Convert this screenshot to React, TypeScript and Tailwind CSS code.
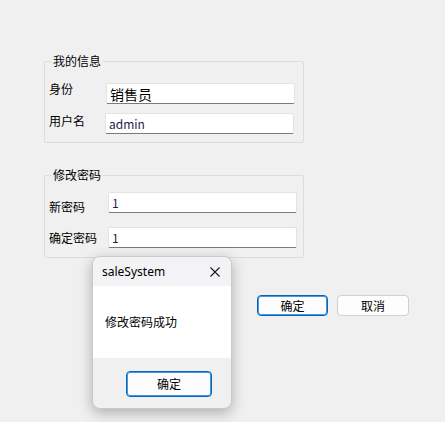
import React from 'react';

const cjk = { fontFamily: '"Noto Sans CJK SC", "Noto Sans", sans-serif' };
const ui = { fontFamily: '"Noto Sans", "Noto Sans CJK SC", sans-serif' };

interface FieldProps {
  value: string;
  className?: string;
  textClass?: string;
}

const TextBox: React.FC<FieldProps> = ({ value, className = '', textClass = '' }) => (
  <div
    className={`h-[21px] w-[189px] bg-white border border-[#e3e3e3] border-b-[#7a7a7a] rounded-[2px] flex items-center pl-[3px] ${className}`}
  >
    <span className={`whitespace-nowrap ${textClass}`} style={cjk}>
      {value}
    </span>
  </div>
);

const Row: React.FC<{ label: string; labelW: string; labelTop: string; top: string; value: string; textClass?: string }> = ({
  label,
  labelW,
  labelTop,
  top,
  value,
  textClass,
}) => (
  <div className={`flex items-start pl-[4px] ${top}`}>
    <span className={`text-[12px] leading-[14px] text-black ${labelW} ${labelTop}`} style={cjk}>
      {label}
    </span>
    <TextBox value={value} textClass={textClass} />
  </div>
);

export default function App() {
  return (
    <div className="relative w-[445px] h-[422px] overflow-hidden bg-[#f0f0f0] pt-[54px]">
      <fieldset className="ml-[44px] w-[260px] h-[89px] border border-[#dcdcdc] rounded-[2px]">
        <legend className="ml-[6px] px-[2px] text-[12px] leading-[14px] text-black" style={cjk}>
          我的信息
        </legend>
        <div className="mt-[14px] flex items-start pl-[4px]">
          <span className="w-[57px] text-[12px] leading-[14px] text-black" style={cjk}>
            身份
          </span>
          <TextBox value="销售员" className="mt-px" textClass="text-[14px] leading-[16px] text-black" />
        </div>
        <div className="mt-[9px] flex items-start pl-[4px]">
          <span className="w-[56px] mt-px text-[12px] leading-[14px] text-black" style={cjk}>
            用户名
          </span>
          <TextBox value="admin" textClass="text-[12px] leading-[14px] text-[#1c1c48]" />
        </div>
      </fieldset>

      <fieldset className="ml-[44px] mt-[25px] w-[260px] h-[90px] border border-[#dcdcdc] rounded-[2px]">
        <legend className="ml-[6px] px-[2px] text-[12px] leading-[14px] text-black" style={cjk}>
          修改密码
        </legend>
        <Row label="新密码" labelW="w-[59px]" labelTop="mt-[8px]" top="mt-[10px]" value="1" textClass="text-[12px] leading-[14px] text-[#1c1c48]" />
        <Row label="确定密码" labelW="w-[59px]" labelTop="mt-[4px]" top="mt-[13px]" value="1" textClass="text-[12px] leading-[14px] text-[#1c1c48]" />
      </fieldset>

      <div className="mt-[37px] ml-[257px] flex gap-[9px]">
        <button
          className="w-[71px] h-[21px] rounded-[4px] bg-[#fdfdfd] border border-[#0067c0] shadow-[inset_0_0_0_1px_#4a95dc] text-[12px] leading-[14px] text-black"
          style={cjk}
        >
          确定
        </button>
        <button
          className="w-[72px] h-[21px] rounded-[4px] bg-[#fdfdfd] border border-[#d0d0d0] text-[12px] leading-[14px] text-black"
          style={cjk}
        >
          取消
        </button>
      </div>

      {/* message box */}
      <div className="absolute left-[92px] top-[256px] w-[140px] h-[153px] rounded-[8px] border border-[#c9c9c9] bg-[#f0f0f0] overflow-hidden shadow-[0_4px_14px_rgba(0,0,0,0.28)] flex flex-col">
        <div className="h-[29px] bg-[#f3f2f5] flex items-center justify-between pl-[9px] pr-[9px]">
          <span className="text-[12px] leading-[14px] text-black" style={ui}>
            saleSystem
          </span>
          <svg width="12" height="12" viewBox="0 0 12 12" className="mr-[1px]">
            <path d="M1.5 1.5 L10.5 10.5 M10.5 1.5 L1.5 10.5" stroke="#1a1a1a" strokeWidth="1.1" />
          </svg>
        </div>
        <div className="h-[72px] bg-white flex items-center pl-[12px]">
          <span className="text-[12px] leading-[14px] text-black" style={cjk}>
            修改密码成功
          </span>
        </div>
        <div className="flex-1 flex pl-[33px] pt-[13px]">
          <button
            className="w-[86px] h-[26px] rounded-[4px] bg-[#fdfdfd] border border-[#0067c0] shadow-[inset_0_0_0_1px_#4a95dc] text-[12px] leading-[14px] text-black"
            style={cjk}
          >
            确定
          </button>
        </div>
      </div>
    </div>
  );
}
